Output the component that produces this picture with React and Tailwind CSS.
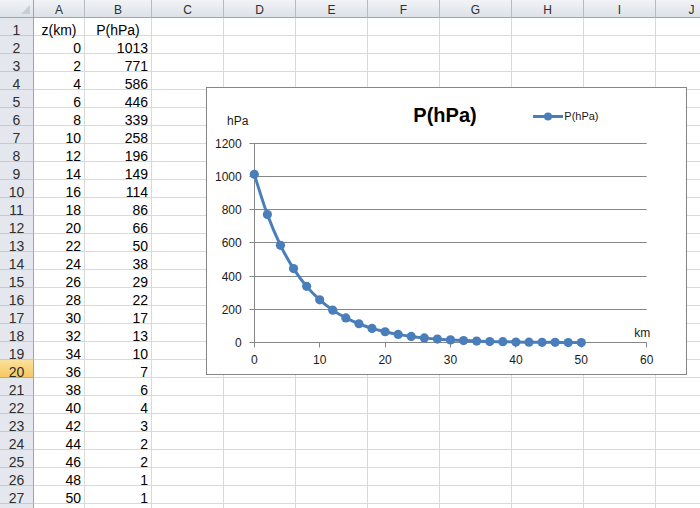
import React from "react";

const P = [1013, 771, 586, 446, 339, 258, 196, 149, 114, 86, 66, 50, 38, 29, 22, 17, 13, 10, 7, 6, 4, 3, 2, 2, 1, 1];

const COLS = [
  { l: "A", w: "w-[51px]" },
  { l: "B", w: "w-[67px]" },
  { l: "C", w: "w-[72px]" },
  { l: "D", w: "w-[72px]" },
  { l: "E", w: "w-[72px]" },
  { l: "F", w: "w-[72px]" },
  { l: "G", w: "w-[72px]" },
  { l: "H", w: "w-[72px]" },
  { l: "I", w: "w-[72px]" },
  { l: "J", w: "w-[72px]" },
];

function cellValue(r, c) {
  if (r === 1) {
    if (c === 0) return { t: "z(km)", align: "center" };
    if (c === 1) return { t: "P(hPa)", align: "center" };
    return null;
  }
  const i = r - 2;
  if (i >= 0 && i < P.length) {
    if (c === 0) return { t: String(i * 2), align: "right" };
    if (c === 1) return { t: String(P[i]), align: "right" };
  }
  return null;
}

const X = (km) => 47.3 + km * 6.54;
const Y = (v) => 254.7 - v * 0.16617;
const crisp = (v) => Math.round(v - 0.5) + 0.5;

function smoothPath(pts) {
  let d = `M${pts[0][0]},${pts[0][1]}`;
  for (let i = 0; i < pts.length - 1; i++) {
    const p0 = pts[i - 1] || pts[i];
    const p1 = pts[i];
    const p2 = pts[i + 1];
    const p3 = pts[i + 2] || p2;
    const t = 1 / 6;
    const c1x = p1[0] + (p2[0] - p0[0]) * t;
    const c1y = p1[1] + (p2[1] - p0[1]) * t;
    const c2x = p2[0] - (p3[0] - p1[0]) * t;
    const c2y = p2[1] - (p3[1] - p1[1]) * t;
    d += ` C${c1x.toFixed(2)},${c1y.toFixed(2)} ${c2x.toFixed(2)},${c2y.toFixed(2)} ${p2[0].toFixed(2)},${p2[1].toFixed(2)}`;
  }
  return d;
}

function Chart() {
  const pts = P.map((v, i) => [X(i * 2), Y(v)]);
  const grid = [0, 200, 400, 600, 800, 1000, 1200];
  const xt = [0, 10, 20, 30, 40, 50, 60];
  const blue = "#4a7ebb";
  return (
    <div className="absolute left-[206px] top-[87px] w-[481px] h-[288px] border border-[#868686] bg-white">
      <svg width="479" height="286" className="absolute left-0 top-0 font-['Liberation_Sans',Arial,sans-serif]">
        {grid.map((g) => (
          <g key={g}>
            <line x1={42.5} x2={X(60)} y1={crisp(Y(g))} y2={crisp(Y(g))} stroke="#868686" strokeWidth="1" />
            <text x={34.7} y={crisp(Y(g)) + 4.4} textAnchor="end" fontSize="12" fill="#1a1a1a">
              {g}
            </text>
          </g>
        ))}
        <line x1={47.5} x2={47.5} y1={crisp(Y(1200))} y2={crisp(Y(0))} stroke="#868686" strokeWidth="1" />
        {xt.map((k) => (
          <g key={k}>
            <line x1={crisp(X(k))} x2={crisp(X(k))} y1={crisp(Y(0))} y2={crisp(Y(0)) + 5} stroke="#868686" strokeWidth="1" />
            <text x={X(k)} y={276.3} textAnchor="middle" fontSize="12" fill="#1a1a1a">
              {k}
            </text>
          </g>
        ))}
        <text x={20} y={37} fontSize="12" fill="#1a1a1a">hPa</text>
        <text x={427.3} y={248.7} fontSize="12" fill="#1a1a1a">km</text>
        <text x={238} y={34} textAnchor="middle" fontSize="20" fontWeight="bold" fill="#000">
          P(hPa)
        </text>
        <line x1={326} x2={356} y1={28.5} y2={28.5} stroke={blue} strokeWidth="3" />
        <circle cx={341} cy={28.5} r={4} fill={blue} />
        <text x={357.3} y={32} fontSize="11" fill="#1a1a1a">P(hPa)</text>
        <path d={smoothPath(pts)} fill="none" stroke={blue} strokeWidth="3" strokeLinejoin="round" />
        {pts.map((p, i) => (
          <circle key={i} cx={p[0]} cy={p[1]} r={4.6} fill={blue} />
        ))}
      </svg>
    </div>
  );
}

export default function App() {
  const rows = Array.from({ length: 28 }, (_, i) => i + 1);
  return (
    <div className="relative w-[700px] h-[508px] overflow-hidden bg-white font-['Liberation_Sans',Arial,sans-serif] text-black">
      <div className="flex h-[18px] w-max">
        <div className="relative w-[34px] h-[18px] shrink-0 border-r border-b border-[#9da5af] bg-gradient-to-b from-[#f1f3f6] to-[#dde2e8]">
          <svg className="absolute right-[3px] bottom-[3px]" width="9" height="9">
            <polygon points="9,0 9,9 0,9" fill="#c9ced4" />
          </svg>
        </div>
        {COLS.map((c) => (
          <div
            key={c.l}
            className={`${c.w} h-[18px] shrink-0 border-r border-b border-r-[#b4bbc4] border-b-[#9da5af] bg-gradient-to-b from-[#f1f3f6] to-[#dde2e8] text-center text-[12px] leading-[10px] pt-[5px] text-[#2e2e2e]`}
          >
            {c.l}
          </div>
        ))}
      </div>
      {rows.map((r) => {
        const sel = r === 20;
        return (
          <div key={r} className="flex h-[18px] w-max">
            <div
              className={
                sel
                  ? "w-[34px] h-[18px] shrink-0 border-r border-b border-r-[#9da5af] border-b-[#e1a53c] bg-gradient-to-b from-[#fbe19a] to-[#f5c861] text-center text-[14px] leading-[10px] pt-[7px] text-[#2e2e2e]"
                  : "w-[34px] h-[18px] shrink-0 border-r border-b border-r-[#9da5af] border-b-[#c5cbd3] bg-[#e4e8ee] text-center text-[14px] leading-[10px] pt-[7px] text-[#2e2e2e]"
              }
            >
              {r <= 27 ? r : ""}
            </div>
            {COLS.map((c, ci) => {
              const v = cellValue(r, ci);
              return (
                <div
                  key={c.l}
                  className={`${c.w} h-[18px] shrink-0 border-r border-b border-[#d9d9d9] text-[14px] leading-[10px] pt-[7px] whitespace-nowrap ${
                    v && v.align === "right" ? "text-right pr-[3px]" : "text-center"
                  }`}
                >
                  {v ? v.t : ""}
                </div>
              );
            })}
          </div>
        );
      })}
      <Chart />
    </div>
  );
}
